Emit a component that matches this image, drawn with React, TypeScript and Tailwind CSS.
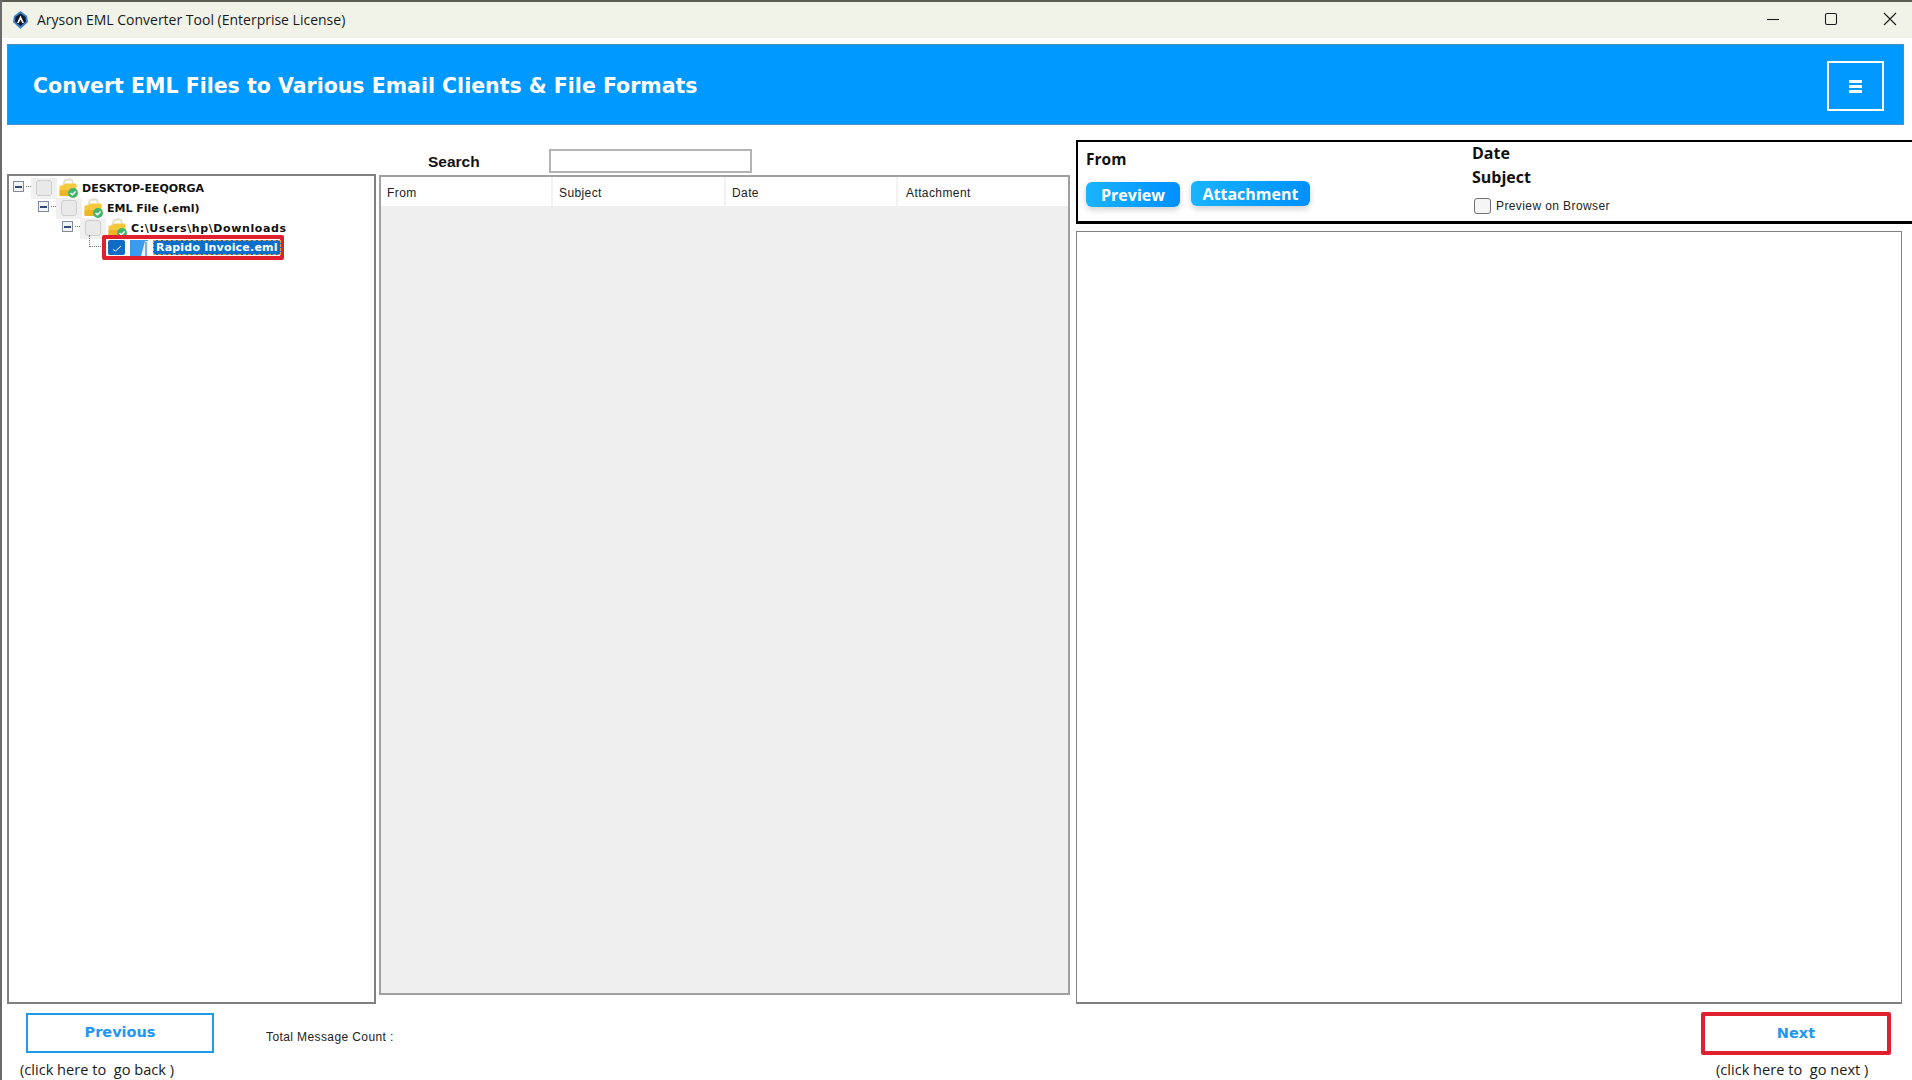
const segoe = "font-['Open_Sans',sans-serif]";
const dejavu = "font-['DejaVu_Sans',sans-serif]";
const small = "font-['Liberation_Sans',sans-serif] text-[12px] tracking-[0.4px] text-[#222]";

function AppLogo() {
  return (
    <svg width="17" height="18" viewBox="0 0 17 18" className="shrink-0">
      <path d="M8.5 0 L15 5 L16 11 L8.5 18 L1 11 L2 5 Z" fill="#3d7fc4" />
      <path d="M8.5 2.5 L13.5 6 L14 10.5 L8.5 15 L3 10.5 L3.5 6 Z" fill="#10182c" />
      <path d="M8.5 4.5 L12 12 H10.2 L8.5 8.5 L6.8 12 H5 Z" fill="#ffffff" />
    </svg>
  );
}

function WindowControls() {
  return (
    <div className="ml-auto flex items-center pb-[2px]">
      <svg width="14" height="14" viewBox="0 0 14 14" className="mr-[44px]">
        <path d="M1 7.5 H13" stroke="#1a1a1a" strokeWidth="1.1" />
      </svg>
      <svg width="14" height="14" viewBox="0 0 14 14" className="mr-[45px]">
        <rect x="1.5" y="1.5" width="11" height="11" rx="1.6" fill="none" stroke="#1a1a1a" strokeWidth="1.1" />
      </svg>
      <svg width="14" height="14" viewBox="0 0 14 14" className="mr-[15px]">
        <path d="M1 1 L13 13 M13 1 L1 13" stroke="#1a1a1a" strokeWidth="1.1" />
      </svg>
    </div>
  );
}

function FolderIcon() {
  return (
    <svg width="19" height="21" viewBox="0 0 19 21" className="shrink-0">
      <path d="M3 9 L5 2.5 L11 1 L14 2.5 L15 9 Z" fill="#e6e0cc" />
      <path d="M5 8 L7 4 L12 3.5 L13.5 8 Z" fill="#ffffff" />
      <path d="M0.5 8.5 H4 L6 6.5 L17 6.5 Q17.5 6.5 17.5 8 V18 Q17.5 19 16.5 19 H1.5 Q0.5 19 0.5 18 Z" fill="#f6c93c" />
      <path d="M0.5 13 H17.5 V18 Q17.5 19 16.5 19 H1.5 Q0.5 19 0.5 18 Z" fill="#eeb52a" />
      <circle cx="14" cy="16" r="5" fill="#3fb66b" />
      <path d="M11.5 16 L13.4 17.8 L16.6 14.4" fill="none" stroke="#ffffff" strokeWidth="1.5" />
    </svg>
  );
}

function Expander() {
  return (
    <span className="mb-[5px] flex h-[11px] w-[11px] shrink-0 items-center justify-center border border-[#808a99] bg-[#f2f4f8]">
      <span className="h-[2px] w-[7px] bg-[#2f4a7a]" />
    </span>
  );
}

function TreeRow({ indent, label, spacing }: { indent: string; label: string; spacing: string }) {
  return (
    <div className={`flex h-[20px] items-center ${indent}`}>
      <Expander />
      <span className="mb-[5px] ml-[2px] w-[5px] border-t border-dotted border-[#777]" />
      <span className="-my-[1px] mb-[1px] flex h-[21px] w-[26px] shrink-0 items-center justify-center bg-[#f0f0f0]">
        <span className="h-[16px] w-[16px] rounded-[3px] border border-[#cfcfcf] bg-[#e9e9e9]" />
      </span>
      <span className="mb-[3px] ml-[2px]">
        <FolderIcon />
      </span>
      <span className={`ml-[4px] whitespace-nowrap ${dejavu} text-[11px] font-bold text-[#111] ${spacing}`}>{label}</span>
    </div>
  );
}

function SelectedRow() {
  return (
    <div className="-mt-[4px] flex items-start">
      <div className="ml-[80px] mr-[1px] h-[12px] w-[12px] border-b border-l border-dotted border-[#777]" />
      <div className="flex h-[25px] w-[182px] items-center rounded-[2px] border-[4px] border-[#e0202e] bg-white pl-[2px]">
        <span className="flex h-[15px] w-[17px] shrink-0 items-center justify-center rounded-[2px] bg-[#0d6cc4]">
          <svg width="10" height="8" viewBox="0 0 10 8">
            <path d="M1 5.5 L3.5 7 L9 2" fill="none" stroke="#ffffff" strokeWidth="1" />
          </svg>
        </span>
        <svg width="18" height="16" viewBox="0 0 18 16" className="ml-[5px] shrink-0">
          <rect x="0" y="0" width="18" height="16" fill="#3b9bef" />
          <path d="M11 16 L15 1 H18 V16 Z" fill="#e6f2fc" />
          <path d="M16 2 V16" stroke="#1e6fc0" strokeWidth="1" />
        </svg>
        <span className={`ml-[5px] whitespace-nowrap border border-dashed border-[#e8a13a] bg-[#0a6ecc] px-[2px] ${dejavu} text-[11px] font-bold leading-[13px] tracking-[0.2px] text-white`}>
          Rapido Invoice.eml
        </span>
      </div>
    </div>
  );
}

function ColumnHead({ label, width }: { label: string; width: string }) {
  return (
    <div className={`flex h-full items-center border-r-2 border-[#f2f2f2] pl-[6px] pt-[3px] ${width} ${small}`}>{label}</div>
  );
}

function BlueButton({ label, width, extra }: { label: string; width: string; extra: string }) {
  return (
    <button className={`h-[25px] rounded-[6px] bg-gradient-to-r from-[#1ab4ff] to-[#0090ff] text-[16px] font-bold text-white shadow-[0_3px_6px_rgba(0,0,0,0.18)] ${segoe} ${width} ${extra}`}>
      {label}
    </button>
  );
}

export default function App() {
  return (
    <div className="flex h-[1080px] w-[1912px] flex-col overflow-hidden border-l-2 border-[#6b6b6b] bg-white">
      {/* Title bar */}
      <div className="flex h-[38px] shrink-0 items-center border-t-2 border-[#5c5c50] bg-[#f1f3e9] pl-[10px]">
        <AppLogo />
        <span className={`mb-[2px] ml-[8px] ${segoe} text-[14px] text-[#1a1a1a]`}>Aryson EML Converter Tool (Enterprise License)</span>
        <WindowControls />
      </div>

      {/* Banner */}
      <div className="ml-[5px] mt-[6px] flex h-[81px] w-[1897px] shrink-0 items-center justify-between border border-[#4a90c0] bg-[#0099ff] pl-[25px] pr-[19px]">
        <h1 className={`mt-[3px] ${dejavu} text-[20.5px] font-bold text-white`}>Convert EML Files to Various Email Clients &amp; File Formats</h1>
        <button className="mt-[3px] flex h-[50px] w-[57px] flex-col items-center justify-center gap-[2px] border-2 border-white">
          <span className="h-[3px] w-[13px] bg-white" />
          <span className="h-[3px] w-[13px] bg-white" />
          <span className="h-[3px] w-[13px] bg-white" />
        </button>
      </div>

      {/* Panels */}
      <div className="flex h-[879px] shrink-0 items-start">
        {/* Tree */}
        <div className="ml-[5px] mt-[49px] h-[830px] w-[369px] shrink-0 border-2 border-[#808080] pt-[3px]">
          <TreeRow indent="pl-[4px]" label="DESKTOP-EEQORGA" spacing="" />
          <TreeRow indent="pl-[29px]" label="EML File (.eml)" spacing="" />
          <TreeRow indent="pl-[53px]" label="C:\Users\hp\Downloads" spacing="tracking-[0.6px]" />
          <SelectedRow />
        </div>

        {/* Message list */}
        <div className="ml-[3px] flex w-[691px] shrink-0 flex-col">
          <div className="mt-[24px] flex h-[24px] items-center">
            <span className="ml-[49px] mt-[2px] w-[121px] font-['Liberation_Sans',sans-serif] text-[15.5px] font-bold text-[#111]">Search</span>
            <input className="h-[24px] w-[203px] border-2 border-[#b4b4b4] bg-white" />
          </div>
          <div className="mt-[2px] flex h-[820px] flex-col border-2 border-[#a0a0a0] bg-[#efefef]">
            <div className="flex h-[29px] shrink-0 bg-white">
              <ColumnHead label="From" width="w-[172px]" />
              <ColumnHead label="Subject" width="w-[173px]" />
              <ColumnHead label="Date" width="w-[172px]" />
              <div className={`flex items-center pl-[8px] pt-[3px] ${small}`}>Attachment</div>
            </div>
          </div>
        </div>

        {/* Preview */}
        <div className="ml-[6px] flex w-[836px] shrink-0 flex-col">
          <div className="mt-[15px] flex h-[84px] border-t-2 border-b-[3px] border-l-2 border-black">
            <div className="w-[394px] shrink-0 pl-[8px]">
              <div className={`mt-[6px] ${segoe} text-[15.5px] font-bold leading-[22px] text-[#111]`}>From</div>
              <div className="mt-[11px] flex items-start">
                <BlueButton label="Preview" width="w-[94px]" extra="mt-[1px]" />
                <BlueButton label="Attachment" width="ml-[11px] w-[119px]" extra="" />
              </div>
            </div>
            <div>
              <div className={`-mt-[1px] ${segoe} text-[16px] font-bold leading-[24px] text-[#111]`}>Date</div>
              <div className={`${segoe} text-[16px] font-bold leading-[24px] text-[#111]`}>Subject</div>
              <div className="mt-[8px] flex items-center pl-[2px]">
                <span className="h-[16px] w-[17px] rounded-[3px] border border-[#707070] bg-[#f5f5f5]" />
                <span className={`ml-[5px] ${small}`}>Preview on Browser</span>
              </div>
            </div>
          </div>
          <div className="mt-[7px] h-[773px] w-[826px] border border-b-2 border-[#808080]" />
        </div>
      </div>

      {/* Footer */}
      <div className="relative flex min-h-0 flex-1 items-start">
        <div className="ml-[24px] mt-[9px] w-[188px] shrink-0">
          <button className={`h-[40px] w-full border-2 border-[#1e9be8] text-[14.5px] font-bold text-[#2196f3] ${dejavu}`}>Previous</button>
        </div>
        <span className={`ml-[52px] mt-[24px] ${small}`}>Total Message Count :</span>
        <div className="ml-auto mr-[21px] mt-[8px] w-[190px] shrink-0">
          <button className={`h-[43px] w-full rounded-[2px] border-[4px] border-[#e0202e] text-[14.5px] font-bold text-[#2196f3] ${dejavu}`}>Next</button>
        </div>
        <span className={`absolute left-[18px] top-[55px] whitespace-pre ${segoe} text-[14.6px] text-[#1a1a1a]`}>(click here to  go back )</span>
        <span className={`absolute left-[1714px] top-[55px] whitespace-pre ${segoe} text-[14.6px] text-[#1a1a1a]`}>(click here to  go next )</span>
      </div>
    </div>
  );
}
